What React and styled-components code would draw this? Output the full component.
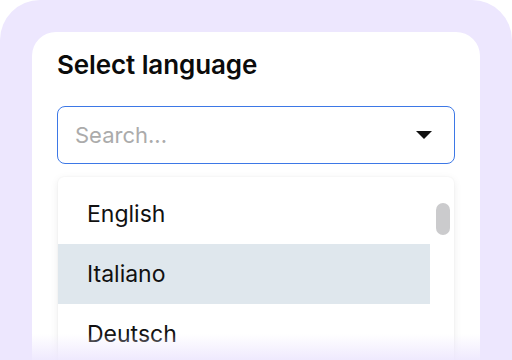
import React from "react";
import styled, { createGlobalStyle } from "styled-components";

const GlobalStyle = createGlobalStyle`
  * { box-sizing: border-box; }
  body {
    margin: 0;
    background: #ffffff;
    font-family: Inter, "Noto Sans", sans-serif;
  }
`;

const Backdrop = styled.div`
  position: relative;
  width: 512px;
  height: 360px;
  overflow: hidden;
  background: #ede7fe;
  border-radius: 40px 40px 0 0;
  padding: 32px 32px 0;
`;

const Card = styled.div`
  height: 100%;
  background: #ffffff;
  border-radius: 24px 24px 0 0;
  padding: 18px 25px 0;
`;

const Title = styled.h2`
  margin: 0 0 26px;
  font-size: 26px;
  line-height: 30px;
  font-weight: 600;
  color: #0b0b0b;
  letter-spacing: -0.1px;
`;

const SearchBox = styled.div`
  display: flex;
  align-items: center;
  justify-content: space-between;
  height: 58px;
  padding: 0 22px 0 15px;
  border: 1px solid #3d78e6;
  border-radius: 8px;
`;

const Input = styled.input`
  flex: 1;
  min-width: 0;
  border: none;
  outline: none;
  background: transparent;
  font-family: inherit;
  font-size: 22px;
  color: #222;
  &::placeholder { color: #ababab; }
`;

const Caret = styled.span`
  width: 0;
  height: 0;
  border-left: 8px solid transparent;
  border-right: 8px solid transparent;
  border-top: 8px solid #111;
`;

const Menu = styled.div`
  position: relative;
  margin: 13px 1px 0;
  padding: 7px 24px 0 0;
  background: #ffffff;
  border-radius: 6px;
  box-shadow: 0 2px 8px rgba(0, 0, 0, 0.08), 0 0 2px rgba(0, 0, 0, 0.05);
`;

const Item = styled.div`
  height: 60px;
  display: flex;
  align-items: center;
  padding-left: 29px;
  font-size: 23px;
  color: #111;
  background: ${({ active }) => (active ? "#dfe7ed" : "transparent")};
`;

const Thumb = styled.div`
  position: absolute;
  top: 26px;
  right: 4px;
  width: 14px;
  height: 32px;
  border-radius: 7px;
  background: #cbcbcd;
`;

const Fade = styled.div`
  position: absolute;
  left: 0;
  right: 0;
  bottom: 0;
  height: 26px;
  background: linear-gradient(to bottom, rgba(237, 231, 254, 0), rgba(237, 231, 254, 0.9));
  pointer-events: none;
`;

const languages = ["English", "Italiano", "Deutsch", "Français"];

export default function App() {
  return (
    <>
      <GlobalStyle />
      <Backdrop>
        <Card>
          <Title>Select language</Title>
          <SearchBox>
            <Input placeholder="Search..." />
            <Caret />
          </SearchBox>
          <Menu>
            {languages.map((lang) => (
              <Item key={lang} active={lang === "Italiano"}>
                {lang}
              </Item>
            ))}
            <Thumb />
          </Menu>
        </Card>
        <Fade />
      </Backdrop>
    </>
  );
}
